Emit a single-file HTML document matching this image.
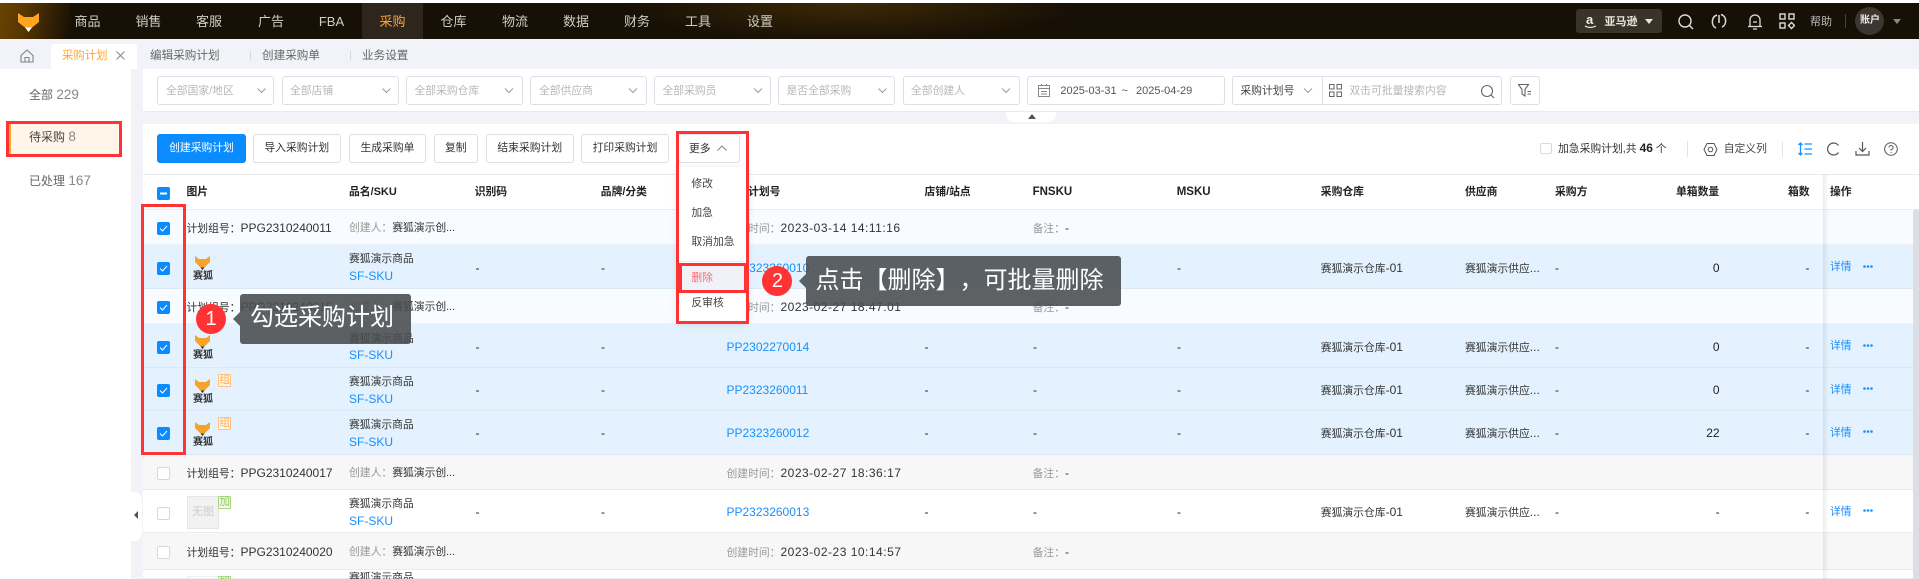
<!DOCTYPE html>
<html lang="zh"><head><meta charset="utf-8"><title>采购计划</title>
<style>
html{margin:0;padding:0;overflow:hidden;width:1919px;height:579px}
body{margin:0;padding:0;width:1919px;height:579px;overflow:hidden;position:relative;background:#f1f3f8;font-family:"Liberation Sans","Noto Sans CJK SC",sans-serif;font-size:10.8px;color:#333;text-spacing-trim:space-all}
div,svg{position:absolute;box-sizing:border-box}
.t{white-space:nowrap;line-height:16px;height:16px}
i{font-style:normal;font-size:12px}
.dt{letter-spacing:.5px}
.nav{color:#cfcdc8;font-size:13px;width:40px;text-align:center;top:13.5px}
.sel{top:76.3px;height:28.4px;background:#fff;border:1px solid #dcdfe6;border-radius:3px}
.ph{top:82.5px;color:#b4b7bc}
.btn{top:134.3px;height:28.4px;background:#fff;border:1px solid #dcdfe6;border-radius:3px;text-align:center;line-height:26px;color:#333;white-space:nowrap}
.h{top:184px;font-weight:bold;color:#222}
.row{left:143px;width:1776px}
.g{background:#f8fbff;border-bottom:1px solid #eef1f5}
.s{background:#e3f2fe;border-bottom:1px solid #dbe8f3}
.gg{background:#f7f7f7;border-bottom:1px solid #ececec}
.w{background:#fff;border-bottom:1px solid #ececec}
.c{left:157px;width:13px;height:13px;border-radius:2px;background:#0a8cff}
.c svg{left:0;top:0}
.u{left:157px;width:13px;height:13px;border-radius:2px;background:#fff;border:1px solid #d9d9d9}
.lb{color:#999}
.lk{color:#1890ff}
.th{left:186.5px;width:32.5px;height:32px;border:1px solid #e8eef3}
.bx{color:#333;font-size:10px;font-weight:bold;left:191px;width:24px;text-align:center}
.tg{left:218px;width:13.4px;height:13px;font-size:10.5px;line-height:11px;text-align:center;border-radius:1px;overflow:hidden}
.or{border:1px solid #ffbf80;color:#ffab55;background:#fff6ea}
.gr{border:1px solid #a7d67e;color:#8cc65a;background:#f5fbee}
.dots{left:1863px;width:10px;height:3px;color:#1890ff}
.red{border:3px solid #f33;background:transparent}
.mi{left:691.4px;color:#444}
.tip{background:rgba(72,75,78,.88);border-radius:3px}
.tip2{color:#fff;font-size:24px;line-height:50px;height:50px;white-space:nowrap}
.cir{background:#f33;border-radius:50%;color:#fff;font-size:20px;text-align:center;line-height:30px;width:30px;height:30px}
.arr{width:0;height:0;border:7px solid transparent;border-right-color:rgba(72,75,78,.88);border-left:0}
</style></head><body>

<div style="left:0;top:0;width:1919px;height:3px;background:#fff"></div>
<div style="left:0;top:3px;width:1919px;height:36px;background:#171005"></div>
<div style="left:0;top:3px;width:70px;height:36px;background:linear-gradient(100deg,#6a4303 0%,#573602 35%,#171005 100%)"></div>
<div style="left:620px;top:3px;width:460px;height:36px;background:radial-gradient(ellipse 230px 40px at 50% 0,#3d2907,rgba(23,16,5,0))"></div>
<div style="left:362px;top:3px;width:61px;height:36px;background:#2e261c"></div>
<svg style="left:18px;top:12px" width="21" height="20" viewBox="0 0 21 20"><path d="M0 1 L6 5 H15 L21 1 L21 10 L13.5 16 L7.500 16 L0 10Z" fill="#ffa51f"/><path d="M7 15.500 H14 L10.500 20Z" fill="#fff"/></svg>
<div class="t nav" style="left:67.500px">商品</div>
<div class="t nav" style="left:128.500px">销售</div>
<div class="t nav" style="left:189px">客服</div>
<div class="t nav" style="left:251px">广告</div>
<div class="t nav" style="left:311.500px">FBA</div>
<div class="t nav" style="left:372.500px;color:#ffa52e">采购</div>
<div class="t nav" style="left:433.500px">仓库</div>
<div class="t nav" style="left:495px">物流</div>
<div class="t nav" style="left:556px">数据</div>
<div class="t nav" style="left:617px">财务</div>
<div class="t nav" style="left:678px">工具</div>
<div class="t nav" style="left:740px">设置</div>

<div style="left:1575.500px;top:9px;width:86px;height:24px;background:#3a3328;border-radius:3px"></div>
<div class="t" style="left:1586px;top:11.500px;color:#eee;font-weight:bold;font-size:13px">a</div>
<svg style="left:1584px;top:25px" width="13" height="4" viewBox="0 0 13 4"><path d="M1 1 Q6 4 12 1" fill="none" stroke="#eee" stroke-width="1.200"/></svg>
<div class="t" style="left:1604.500px;top:13.500px;color:#e8e6e2;font-weight:bold;font-size:11px">亚马逊</div>
<div style="left:1645px;top:19px;border:4px solid transparent;border-top:5px solid #e8e6e2;border-bottom:0"></div>
<svg style="left:1677px;top:13px" width="18" height="18" viewBox="0 0 18 18" fill="none" stroke="#ddd" stroke-width="1.400"><circle cx="8" cy="8" r="6"/><path d="M12.500 12.500 L16 16"/></svg>
<svg style="left:1711px;top:13px" width="16" height="18" viewBox="0 0 16 18" fill="none" stroke="#ddd" stroke-width="1.500"><path d="M5 15 C0 13 0 4 6 2 M10 1.500 C16 3 16 12 11 14"/><path d="M8 2 V10"/></svg>
<svg style="left:1747px;top:13px" width="16" height="18" viewBox="0 0 16 18" fill="none" stroke="#ddd" stroke-width="1.300"><path d="M3 13 V7 A5 5 0 0 1 13 7 V13 M1 13.500 H15 M6 9 H10 M6 16 H10"/></svg>
<svg style="left:1779px;top:13px" width="16" height="17" viewBox="0 0 16 17" fill="none" stroke="#ddd" stroke-width="1.400"><rect x="1" y="1" width="5" height="5"/><rect x="10" y="1" width="5" height="5"/><rect x="1" y="10" width="5" height="5"/><path d="M12.500 9.500 L15.500 12.500 L12.500 15.500 L9.500 12.500Z"/></svg>
<div class="t" style="left:1810px;top:13.500px;color:#bbb;font-size:11px">帮助</div>
<div style="left:1844.500px;top:14px;width:1px;height:14px;background:#4a4238"></div>
<div style="left:1854.700px;top:7px;width:29px;height:28px;border-radius:50%;background:#3b362f"></div>
<div class="t" style="left:1860px;top:13px;color:#e8e6e2;font-size:10px;font-weight:bold">账户</div>
<div style="left:1893px;top:19px;border:4px solid transparent;border-top:5px solid #8d8a85;border-bottom:0"></div>

<svg style="left:20px;top:49px" width="14" height="14" viewBox="0 0 14 14" fill="none" stroke="#7d8591" stroke-width="1.100"><path d="M1 6.500 L7 1 L13 6.500 V13 H1Z M5 13 V8.500 H9 V13"/></svg>
<div style="left:51px;top:44px;width:86px;height:25px;background:#fff;border-radius:3px 3px 0 0"></div>
<div class="t" style="left:62px;top:48px;color:#ffa53a;font-size:11.400px">采购计划</div>
<svg style="left:116px;top:51px" width="9" height="9" viewBox="0 0 9 9" stroke="#888" fill="none"><path d="M0.500 0.500 L8.500 8.500 M8.500 0.500 L0.500 8.500"/></svg>
<div class="t" style="left:150px;top:48px;color:#666;font-size:11.600px">编辑采购计划</div>
<div style="left:250px;top:51px;width:1px;height:9px;background:#d5d8de"></div>
<div class="t" style="left:262px;top:48px;color:#666;font-size:11.600px">创建采购单</div>
<div style="left:350px;top:51px;width:1px;height:9px;background:#d5d8de"></div>
<div class="t" style="left:362px;top:48px;color:#666;font-size:11.600px">业务设置</div>

<div style="left:0;top:69px;width:131px;height:510px;background:#fff"></div>
<div class="t" style="left:29px;top:87px;color:#666;font-size:12px">全部 <span style="font-size:13.500px;color:#888">229</span></div>
<div style="left:9px;top:122.700px;width:111px;height:32.300px;background:#fff6e9;border-left:2px solid #ffa52e"></div>
<div class="t" style="left:29px;top:129px;color:#444;font-size:12px">待采购 <span style="font-size:13.500px;color:#888">8</span></div>
<div class="red" style="left:6px;top:120.700px;width:116px;height:36px"></div>
<div class="t" style="left:29px;top:172.500px;color:#666;font-size:12px">已处理 <span style="font-size:13.500px;color:#888">167</span></div>

<div style="left:143px;top:69px;width:1776px;height:43px;background:#fff;border-bottom:1px solid #e8eaee"></div>
<div class="sel" style="left:157px;width:116.500px"></div><div class="t ph" style="left:166px">全部国家/地区</div>
<div class="sel" style="left:282px;width:117px"></div><div class="t ph" style="left:290px">全部店铺</div>
<div class="sel" style="left:406px;width:117px"></div><div class="t ph" style="left:414.500px">全部采购仓库</div>
<div class="sel" style="left:530px;width:116.500px"></div><div class="t ph" style="left:539px">全部供应商</div>
<div class="sel" style="left:654px;width:116.600px"></div><div class="t ph" style="left:662.500px">全部采购员</div>
<div class="sel" style="left:778px;width:117px"></div><div class="t ph" style="left:786.500px">是否全部采购</div>
<div class="sel" style="left:903px;width:117px"></div><div class="t ph" style="left:911px">全部创建人</div>
<div class="sel" style="left:1027px;width:197.500px"></div>
<svg style="left:1038px;top:84px" width="12" height="13" viewBox="0 0 12 13" fill="none" stroke="#888"><rect x="0.500" y="1.500" width="11" height="11"/><path d="M0.500 4.500 H11.500 M3.500 0 V2 M8.500 0 V2 M3 7.500 H9 M3 10 H9"/></svg>
<div class="t" style="left:1060.400px;top:83px;color:#555;font-size:11px">2025-03-31</div>
<div class="t" style="left:1121.500px;top:83px;color:#555;font-size:11px">~</div>
<div class="t" style="left:1136px;top:83px;color:#555;font-size:11px">2025-04-29</div>
<div class="sel" style="left:1232px;width:270px"></div>
<div class="t" style="left:1240.400px;top:82.500px;color:#444">采购计划号</div>
<div style="left:1321.600px;top:77px;width:1px;height:27px;background:#dcdfe6"></div>
<svg style="left:0;top:0;width:1919px;height:110px" viewBox="0 0 1919 110" fill="none" stroke="#9a9da3" stroke-width="1"><path d="M257.500 88.500 l4 4 l4 -4 M382.500 88.500 l4 4 l4 -4 M505 88.500 l4 4 l4 -4 M629 88.500 l4 4 l4 -4 M754 88.500 l4 4 l4 -4 M878.500 88.500 l4 4 l4 -4 M1002 88.500 l4 4 l4 -4 M1304 88.500 l4 4 l4 -4"/></svg>
<svg style="left:1329px;top:84px" width="13" height="13" viewBox="0 0 13 13" fill="none" stroke="#666"><rect x="0.500" y="0.500" width="4.500" height="4.500"/><rect x="8" y="0.500" width="4.500" height="4.500"/><rect x="0.500" y="8" width="4.500" height="4.500"/><rect x="8" y="8" width="4.500" height="4.500"/></svg>
<div class="t ph" style="left:1349.400px">双击可批量搜索内容</div>
<svg style="left:1480px;top:84px" width="15" height="15" viewBox="0 0 15 15" fill="none" stroke="#666" stroke-width="1.100"><circle cx="7" cy="7" r="5.500"/><path d="M11 11 L14 14"/></svg>
<div class="sel" style="left:1510px;width:30px"></div>
<svg style="left:1518px;top:84px" width="14" height="13" viewBox="0 0 14 13" fill="none" stroke="#666" stroke-width="1.100"><path d="M0.500 0.500 H10.500 L7 5.500 V12 L4 10 V5.500Z"/><path d="M9.500 7.500 H13 M9.500 10 H13" stroke="#666"/></svg>
<div style="left:1006px;top:112px;width:50px;height:10px;background:#fff;border-radius:0 0 8px 8px"></div>
<div style="left:1027.500px;top:114px;border:4px solid transparent;border-bottom:5px solid #555;border-top:0"></div>

<div style="left:143px;top:124px;width:1776px;height:455px;background:#fff"></div>
<div style="left:143px;top:174px;width:1776px;height:1px;background:#e8eaee"></div>
<div class="btn" style="left:157px;width:89px;background:#0a8cff;border-color:#0a8cff;color:#fff">创建采购计划</div>
<div class="btn" style="left:253px;width:87.500px">导入采购计划</div>
<div class="btn" style="left:349px;width:77px">生成采购单</div>
<div class="btn" style="left:433.500px;width:44.500px">复制</div>
<div class="btn" style="left:486px;width:87.500px">结束采购计划</div>
<div class="btn" style="left:581px;width:88px">打印采购计划</div>
<div class="btn" style="left:678px;width:61.600px"></div>
<div class="t" style="left:689px;top:141px">更多</div>
<svg style="left:717px;top:145px" width="10" height="6" viewBox="0 0 10 6" fill="none" stroke="#888"><path d="M0.500 5.500 L5 1 L9.500 5.500"/></svg>

<div class="u" style="left:1540px;top:142.700px;width:12px;height:11px"></div>
<div class="t" style="left:1558px;top:140px">加急采购计划,共 <b style="font-size:12px;color:#222">46</b> 个</div>
<div style="left:1686.500px;top:141px;width:1px;height:16px;background:#e2e4e8"></div>
<svg style="left:1703px;top:142px" width="15" height="15" viewBox="0 0 15 15" fill="none" stroke="#555" stroke-width="1"><path d="M4 1.500 H11 L14 7.500 L11 13.500 H4 L1 7.500Z"/><circle cx="7.500" cy="7.500" r="2.300"/></svg>
<div class="t" style="left:1723.700px;top:141px;color:#444">自定义列</div>
<div style="left:1781.600px;top:141px;width:1px;height:16px;background:#e2e4e8"></div>
<svg style="left:1798px;top:142px" width="14" height="14" viewBox="0 0 14 14" fill="none" stroke="#1890ff" stroke-width="1.300"><path d="M2.500 1 V13 M0.500 3 L2.500 1 L4.500 3 M0.500 11 L2.500 13 L4.500 11 M6.500 2 H14 M6.500 7 H14 M6.500 12 H14"/></svg>
<svg style="left:1826px;top:142px" width="14" height="14" viewBox="0 0 14 14" fill="none" stroke="#555" stroke-width="1.200"><path d="M12.500 3.500 A6 6 0 1 0 12.500 10.500"/></svg>
<svg style="left:1855px;top:142px" width="15" height="14" viewBox="0 0 15 14" fill="none" stroke="#555" stroke-width="1.200"><path d="M7.500 0 V9 M4 6 L7.500 9.500 L11 6 M1 9 V13 H14 V9"/></svg>
<svg style="left:1884px;top:142px" width="14" height="14" viewBox="0 0 14 14" fill="none" stroke="#555" stroke-width="1"><circle cx="7" cy="7" r="6.300"/><path d="M5 5.500 A2 2 0 1 1 7 7.500 V8.500 M7 10 V11"/></svg>

<div class="c" style="top:186.500px"><svg width="13" height="13"><rect x="3" y="5.500" width="7" height="2" fill="#fff"/></svg></div>
<div class="t h" style="left:186.500px">图片</div>
<div class="t h" style="left:349px"><span>品名/</span><i style="font-size:11px">SKU</i></div>
<div class="t h" style="left:474.700px">识别码</div>
<div class="t h" style="left:600.800px">品牌/分类</div>
<div class="t h" style="left:726.500px">采购计划号</div>
<div class="t h" style="left:924.500px">店铺/站点</div>
<div class="t h" style="left:1032.600px;font-size:11.500px">FNSKU</div>
<div class="t h" style="left:1176.700px;font-size:11.500px">MSKU</div>
<div class="t h" style="left:1320.800px">采购仓库</div>
<div class="t h" style="left:1465px">供应商</div>
<div class="t h" style="left:1555px">采购方</div>
<div class="t h" style="left:1676px">单箱数量</div>
<div class="t h" style="left:1788px">箱数</div>
<div class="t h" style="left:1830px">操作</div>

<div class="row g" style="top:209px;height:36px;border-top:1px solid #e8ebf0"></div>
<div class="row s" style="top:245px;height:43.700px"></div>
<div class="row g" style="top:288.700px;height:35.300px"></div>
<div class="row s" style="top:324px;height:43.700px"></div>
<div class="row s" style="top:367.700px;height:43.600px"></div>
<div class="row s" style="top:411.300px;height:43.400px"></div>
<div class="row gg" style="top:454.700px;height:35.300px"></div>
<div class="row w" style="top:490px;height:43px"></div>
<div class="row gg" style="top:533px;height:36.700px"></div>
<div class="row w" style="top:569.700px;height:9.300px"></div>

<div class="c" style="top:222px"><svg width="13" height="13" fill="none" stroke="#fff" stroke-width="1"><path d="M3 6.500 L5.500 9 L10 4"/></svg></div>
<div class="c" style="top:261.700px"><svg width="13" height="13" fill="none" stroke="#fff" stroke-width="1"><path d="M3 6.500 L5.500 9 L10 4"/></svg></div>
<div class="c" style="top:301px"><svg width="13" height="13" fill="none" stroke="#fff" stroke-width="1"><path d="M3 6.500 L5.500 9 L10 4"/></svg></div>
<div class="c" style="top:341px"><svg width="13" height="13" fill="none" stroke="#fff" stroke-width="1"><path d="M3 6.500 L5.500 9 L10 4"/></svg></div>
<div class="c" style="top:384px"><svg width="13" height="13" fill="none" stroke="#fff" stroke-width="1"><path d="M3 6.500 L5.500 9 L10 4"/></svg></div>
<div class="c" style="top:427px"><svg width="13" height="13" fill="none" stroke="#fff" stroke-width="1"><path d="M3 6.500 L5.500 9 L10 4"/></svg></div>
<div class="u" style="top:467px"></div>
<div class="u" style="top:507px"></div>
<div class="u" style="top:546px"></div>

<div class="t" style="left:186.500px;top:220px">计划组号：<i>PPG2310240011</i></div>
<div class="t" style="left:349px;top:220px"><span class="lb">创建人：</span>赛狐演示创...</div>
<div class="t" style="left:726.500px;top:220px"><span class="lb">创建时间：</span><i class="dt">2023-03-14 14:11:16</i></div>
<div class="t" style="left:1032.600px;top:220px"><span class="lb">备注：</span><i>-</i></div>
<div class="t" style="left:186.500px;top:298.700px">计划组号：<i>PPG2310240015</i></div>
<div class="t" style="left:349px;top:298.700px"><span class="lb">创建人：</span>赛狐演示创...</div>
<div class="t" style="left:726.500px;top:298.700px"><span class="lb">创建时间：</span><i class="dt">2023-02-27 18:47:01</i></div>
<div class="t" style="left:1032.600px;top:298.700px"><span class="lb">备注：</span><i>-</i></div>
<div class="t" style="left:186.500px;top:465px">计划组号：<i>PPG2310240017</i></div>
<div class="t" style="left:349px;top:465px"><span class="lb">创建人：</span>赛狐演示创...</div>
<div class="t" style="left:726.500px;top:465px"><span class="lb">创建时间：</span><i class="dt">2023-02-27 18:36:17</i></div>
<div class="t" style="left:1032.600px;top:465px"><span class="lb">备注：</span><i>-</i></div>
<div class="t" style="left:186.500px;top:544px">计划组号：<i>PPG2310240020</i></div>
<div class="t" style="left:349px;top:544px"><span class="lb">创建人：</span>赛狐演示创...</div>
<div class="t" style="left:726.500px;top:544px"><span class="lb">创建时间：</span><i class="dt">2023-02-23 10:14:57</i></div>
<div class="t" style="left:1032.600px;top:544px"><span class="lb">备注：</span><i>-</i></div>

<div class="th" style="top:251px"></div>
<svg style="left:195px;top:256px" width="15" height="14" viewBox="0 0 15 14"><path d="M0 0 L4 3 H11 L15 0 V6 L9.500 11.500 H5.500 L0 6Z" fill="#f5a329"/><path d="M5.500 11.500 H9.500 L7.500 14Z" fill="#333"/></svg>
<div class="t bx" style="top:269px">赛狐</div>
<div class="th" style="top:330px"></div>
<svg style="left:195px;top:335px" width="15" height="14" viewBox="0 0 15 14"><path d="M0 0 L4 3 H11 L15 0 V6 L9.500 11.500 H5.500 L0 6Z" fill="#f5a329"/><path d="M5.500 11.500 H9.500 L7.500 14Z" fill="#333"/></svg>
<div class="t bx" style="top:348px">赛狐</div>
<div class="th" style="top:374px"></div>
<svg style="left:195px;top:379px" width="15" height="14" viewBox="0 0 15 14"><path d="M0 0 L4 3 H11 L15 0 V6 L9.500 11.500 H5.500 L0 6Z" fill="#f5a329"/><path d="M5.500 11.500 H9.500 L7.500 14Z" fill="#333"/></svg>
<div class="t bx" style="top:392px">赛狐</div>
<div class="tg or" style="top:374px">组</div>
<div class="th" style="top:417px"></div>
<svg style="left:195px;top:422px" width="15" height="14" viewBox="0 0 15 14"><path d="M0 0 L4 3 H11 L15 0 V6 L9.500 11.500 H5.500 L0 6Z" fill="#f5a329"/><path d="M5.500 11.500 H9.500 L7.500 14Z" fill="#333"/></svg>
<div class="t bx" style="top:435px">赛狐</div>
<div class="tg or" style="top:417px">组</div>
<div class="th" style="top:495.700px;height:33px;background:#f2f2f2;border-color:#e6e6e6"></div>
<div class="t" style="left:191px;top:504px;width:24px;text-align:center;color:#d8d8d8;font-weight:bold;font-size:11px">无图</div>
<div class="tg gr" style="top:496px">加</div>
<div class="th" style="top:575.700px;height:3.300px;border-bottom:0"></div>
<div class="tg gr" style="top:575.700px;height:3.300px;border-bottom:0">加</div>

<div class="t" style="left:349px;top:251px">赛狐演示商品</div><div class="t lk" style="left:349px;top:268px"><i>SF-SKU</i></div>
<div class="t" style="left:349px;top:331px">赛狐演示商品</div><div class="t lk" style="left:349px;top:347px"><i>SF-SKU</i></div>
<div class="t" style="left:349px;top:373.700px">赛狐演示商品</div><div class="t lk" style="left:349px;top:390.700px"><i>SF-SKU</i></div>
<div class="t" style="left:349px;top:417.300px">赛狐演示商品</div><div class="t lk" style="left:349px;top:434.300px"><i>SF-SKU</i></div>
<div class="t" style="left:349px;top:496px">赛狐演示商品</div><div class="t lk" style="left:349px;top:513px"><i>SF-SKU</i></div>
<div class="t" style="left:349px;top:563px;height:16px;overflow:hidden;line-height:30px">赛狐演示商品</div>

<div class="t" style="left:475.500px;top:260px;color:#222"><i>-</i></div><div class="t" style="left:601px;top:260px;color:#222"><i>-</i></div><div class="t lk" style="left:726.500px;top:260px"><i>PP2323260010</i></div><div class="t" style="left:924.500px;top:260px;color:#222"><i>-</i></div><div class="t" style="left:1033px;top:260px;color:#222"><i>-</i></div><div class="t" style="left:1177px;top:260px;color:#222"><i>-</i></div><div class="t" style="left:1320.800px;top:260px">赛狐演示仓库<i>-01</i></div><div class="t" style="left:1465px;top:260px">赛狐演示供应<i>...</i></div><div class="t" style="left:1555px;top:260px;color:#222"><i>-</i></div><div class="t" style="left:1680px;width:39.600px;text-align:right;top:260px;color:#222"><i>0</i></div><div class="t" style="left:1770px;width:39.400px;text-align:right;top:260px;color:#222"><i>-</i></div>
<div class="t" style="left:475.500px;top:339px;color:#222"><i>-</i></div><div class="t" style="left:601px;top:339px;color:#222"><i>-</i></div><div class="t lk" style="left:726.500px;top:339px"><i>PP2302270014</i></div><div class="t" style="left:924.500px;top:339px;color:#222"><i>-</i></div><div class="t" style="left:1033px;top:339px;color:#222"><i>-</i></div><div class="t" style="left:1177px;top:339px;color:#222"><i>-</i></div><div class="t" style="left:1320.800px;top:339px">赛狐演示仓库<i>-01</i></div><div class="t" style="left:1465px;top:339px">赛狐演示供应<i>...</i></div><div class="t" style="left:1555px;top:339px;color:#222"><i>-</i></div><div class="t" style="left:1680px;width:39.600px;text-align:right;top:339px;color:#222"><i>0</i></div><div class="t" style="left:1770px;width:39.400px;text-align:right;top:339px;color:#222"><i>-</i></div>
<div class="t" style="left:475.500px;top:382px;color:#222"><i>-</i></div><div class="t" style="left:601px;top:382px;color:#222"><i>-</i></div><div class="t lk" style="left:726.500px;top:382px"><i>PP2323260011</i></div><div class="t" style="left:924.500px;top:382px;color:#222"><i>-</i></div><div class="t" style="left:1033px;top:382px;color:#222"><i>-</i></div><div class="t" style="left:1177px;top:382px;color:#222"><i>-</i></div><div class="t" style="left:1320.800px;top:382px">赛狐演示仓库<i>-01</i></div><div class="t" style="left:1465px;top:382px">赛狐演示供应<i>...</i></div><div class="t" style="left:1555px;top:382px;color:#222"><i>-</i></div><div class="t" style="left:1680px;width:39.600px;text-align:right;top:382px;color:#222"><i>0</i></div><div class="t" style="left:1770px;width:39.400px;text-align:right;top:382px;color:#222"><i>-</i></div>
<div class="t" style="left:475.500px;top:425px;color:#222"><i>-</i></div><div class="t" style="left:601px;top:425px;color:#222"><i>-</i></div><div class="t lk" style="left:726.500px;top:425px"><i>PP2323260012</i></div><div class="t" style="left:924.500px;top:425px;color:#222"><i>-</i></div><div class="t" style="left:1033px;top:425px;color:#222"><i>-</i></div><div class="t" style="left:1177px;top:425px;color:#222"><i>-</i></div><div class="t" style="left:1320.800px;top:425px">赛狐演示仓库<i>-01</i></div><div class="t" style="left:1465px;top:425px">赛狐演示供应<i>...</i></div><div class="t" style="left:1555px;top:425px;color:#222"><i>-</i></div><div class="t" style="left:1680px;width:39.600px;text-align:right;top:425px;color:#222"><i>22</i></div><div class="t" style="left:1770px;width:39.400px;text-align:right;top:425px;color:#222"><i>-</i></div>
<div class="t" style="left:475.500px;top:504px;color:#222"><i>-</i></div><div class="t" style="left:601px;top:504px;color:#222"><i>-</i></div><div class="t lk" style="left:726.500px;top:504px"><i>PP2323260013</i></div><div class="t" style="left:924.500px;top:504px;color:#222"><i>-</i></div><div class="t" style="left:1033px;top:504px;color:#222"><i>-</i></div><div class="t" style="left:1177px;top:504px;color:#222"><i>-</i></div><div class="t" style="left:1320.800px;top:504px">赛狐演示仓库<i>-01</i></div><div class="t" style="left:1465px;top:504px">赛狐演示供应<i>...</i></div><div class="t" style="left:1555px;top:504px;color:#222"><i>-</i></div><div class="t" style="left:1680px;width:39.600px;text-align:right;top:504px;color:#222"><i>-</i></div><div class="t" style="left:1770px;width:39.400px;text-align:right;top:504px;color:#222"><i>-</i></div>

<div style="left:1823px;top:174px;width:6px;height:405px;background:linear-gradient(90deg,rgba(0,0,0,.07),rgba(0,0,0,0))"></div>
<div class="t lk" style="left:1830px;top:259px">详情</div><svg class="dots" style="top:264.500px" viewBox="0 0 10 3"><circle cx="1.500" cy="1.500" r="1.300" fill="#1890ff"/><circle cx="5" cy="1.500" r="1.300" fill="#1890ff"/><circle cx="8.500" cy="1.500" r="1.300" fill="#1890ff"/></svg>
<div class="t lk" style="left:1830px;top:338px">详情</div><svg class="dots" style="top:343.500px" viewBox="0 0 10 3"><circle cx="1.500" cy="1.500" r="1.300" fill="#1890ff"/><circle cx="5" cy="1.500" r="1.300" fill="#1890ff"/><circle cx="8.500" cy="1.500" r="1.300" fill="#1890ff"/></svg>
<div class="t lk" style="left:1830px;top:381.700px">详情</div><svg class="dots" style="top:386.500px" viewBox="0 0 10 3"><circle cx="1.500" cy="1.500" r="1.300" fill="#1890ff"/><circle cx="5" cy="1.500" r="1.300" fill="#1890ff"/><circle cx="8.500" cy="1.500" r="1.300" fill="#1890ff"/></svg>
<div class="t lk" style="left:1830px;top:425px">详情</div><svg class="dots" style="top:429.500px" viewBox="0 0 10 3"><circle cx="1.500" cy="1.500" r="1.300" fill="#1890ff"/><circle cx="5" cy="1.500" r="1.300" fill="#1890ff"/><circle cx="8.500" cy="1.500" r="1.300" fill="#1890ff"/></svg>
<div class="t lk" style="left:1830px;top:504px">详情</div><svg class="dots" style="top:508.500px" viewBox="0 0 10 3"><circle cx="1.500" cy="1.500" r="1.300" fill="#1890ff"/><circle cx="5" cy="1.500" r="1.300" fill="#1890ff"/><circle cx="8.500" cy="1.500" r="1.300" fill="#1890ff"/></svg>

<div style="left:1912.700px;top:209px;width:6.300px;height:370px;background:#dcdee3;border-radius:3px 3px 0 0"></div>

<div style="left:131px;top:492px;width:11px;height:49px;background:#fff;border-radius:0 8px 8px 0"></div>
<div style="left:133.500px;top:511px;border:4px solid transparent;border-right:4px solid #555;border-left:0"></div>

<div style="left:678px;top:166.700px;width:69px;height:155px;background:#fff;box-shadow:0 2px 8px rgba(0,0,0,.12)"></div>
<div class="t mi" style="top:176px">修改</div>
<div class="t mi" style="top:204.700px">加急</div>
<div class="t mi" style="top:233.700px">取消加急</div>
<div style="left:681px;top:260.700px;width:63px;height:1px;background:#eaecef"></div>
<div style="left:679.600px;top:263.300px;width:66.400px;height:29.400px;background:#f0f2f7"></div>
<div class="t" style="left:691.400px;top:270px;color:#ff6b74">删除</div>
<div class="t mi" style="top:295px">反审核</div>
<div class="red" style="left:675.500px;top:130.700px;width:73.500px;height:193.300px"></div>
<div class="red" style="left:679px;top:263px;width:67.500px;height:30px"></div>
<div class="red" style="left:141px;top:204px;width:45px;height:250.700px"></div>

<div class="cir" style="left:196px;top:304px">1</div>
<div class="arr" style="left:233px;top:312px"></div>
<div class="tip" style="left:240px;top:294px;width:171px;height:50px"></div>
<div class="tip2" style="left:250px;top:293px">勾选采购计划</div>
<div class="cir" style="left:762.400px;top:266px">2</div>
<div class="arr" style="left:799px;top:274px"></div>
<div class="tip" style="left:806px;top:256px;width:315px;height:50px"></div>
<div class="tip2" style="left:815.500px;top:256px">点击【删除】，可批量删除</div>
</body></html>
